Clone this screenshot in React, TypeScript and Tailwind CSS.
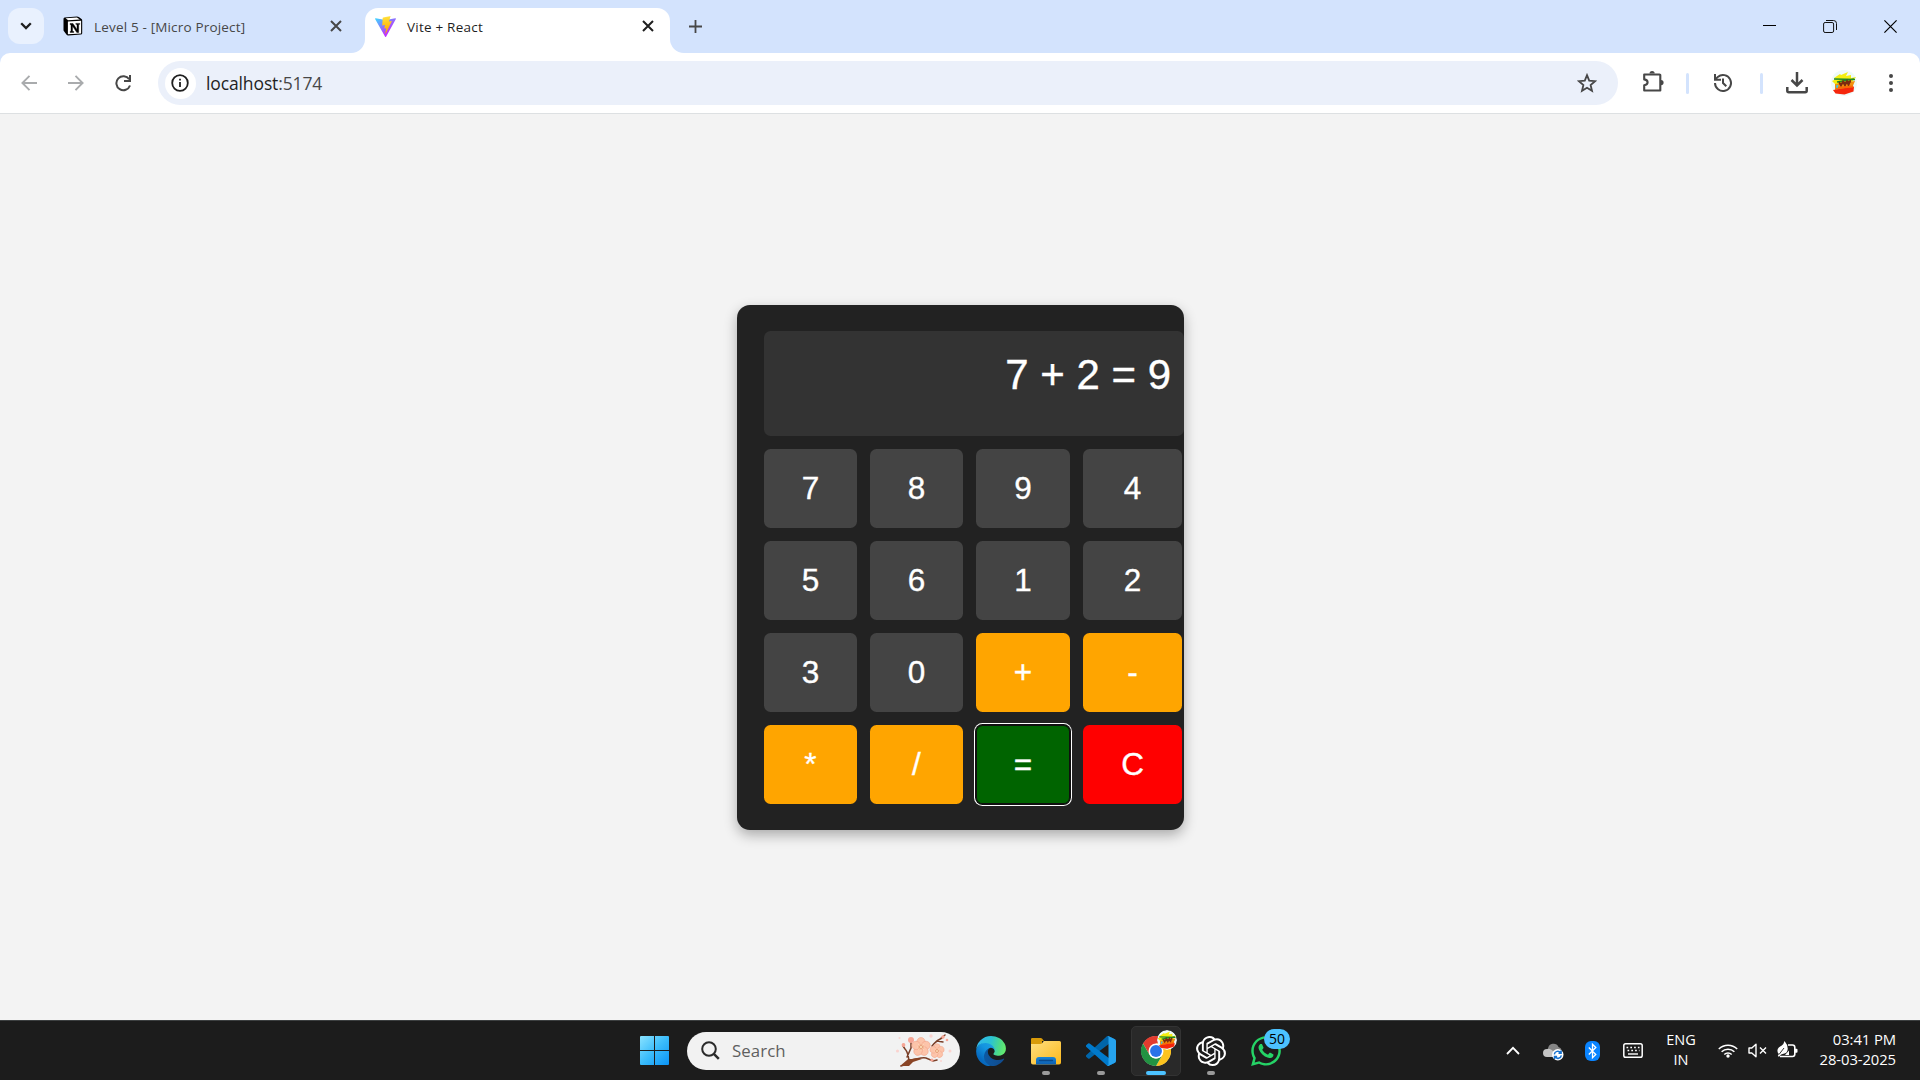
import React from "react";
import { FaWhatsapp } from "react-icons/fa";
import { SiOpenai } from "react-icons/si";

const UI = "font-['Open_Sans','Noto_Sans',sans-serif]";

function Cross({ className, color }: { className: string; color: string }) {
  return (
    <svg className={className} width="12" height="12" viewBox="0 0 12 12" stroke={color} strokeWidth="2" fill="none">
      <path d="M1 1l10 10M11 1L1 11" />
    </svg>
  );
}

function NotionIcon() {
  return (
    <svg width="20" height="20" viewBox="0 0 20 20" className="-ml-px shrink-0">
      <path d="M1.6 1.6L14 .6q1 0 1.800.5l2.700 2q.7.5.7 1.400v12.700q0 1.300-1.400 1.400L5.300 19.400q-1 .1-1.700-.7L1 15.300q-.5-.6-.5-1.400V3q0-1.300 1.100-1.400z" fill="#000" />
      <path d="M2.600 2.300l11.300-.8 2.900 1.900-11.700.8z" fill="#fff" />
      <path d="M4.900 5.500l13.200-.8v12.700l-13.200.9z" fill="#fff" />
      <path d="M7 7.500h3l4 6V8.500l-1.200-.2v-.9h4v.9l-1.100.3v7.900h-1.900L9.500 10v5.300l1.300.2v.9H7.100v-.9l.9-.3V8.700l-1-.2z" fill="#000" stroke="#000" strokeWidth=".4" />
    </svg>
  );
}

function ViteIcon() {
  return (
    <svg width="21" height="21" viewBox="0 0 256 257" className="shrink-0">
      <defs>
        <linearGradient id="va" x1="-.828%" x2="57.636%" y1="7.652%" y2="78.411%">
          <stop offset="0" stopColor="#41D1FF" />
          <stop offset="1" stopColor="#BD34FE" />
        </linearGradient>
        <linearGradient id="vb" x1="43.376%" x2="50.316%" y1="2.242%" y2="89.03%">
          <stop offset="0" stopColor="#FFEA83" />
          <stop offset=".08" stopColor="#FFDD35" />
          <stop offset="1" stopColor="#FFA800" />
        </linearGradient>
      </defs>
      <path fill="url(#va)" d="M255.153 37.938L134.897 252.976c-2.483 4.44-8.862 4.466-11.382.048L.875 37.958c-2.746-4.814 1.371-10.646 6.827-9.67l120.385 21.517a6.537 6.537 0 0 0 2.322-.004l117.867-21.483c5.438-.991 9.574 4.796 6.877 9.62Z" />
      <path fill="url(#vb)" d="M185.432.063L96.44 17.501a3.268 3.268 0 0 0-2.634 3.014l-5.474 92.456a3.268 3.268 0 0 0 3.997 3.378l24.777-5.718c2.318-.535 4.413 1.507 3.936 3.838l-7.361 36.047c-.495 2.426 1.782 4.5 4.151 3.78l15.304-4.649c2.372-.72 4.652 1.36 4.15 3.788l-11.698 56.621c-.732 3.542 3.979 5.473 5.943 2.437l1.313-2.028l72.516-144.72c1.215-2.423-.88-5.186-3.54-4.672l-25.505 4.922c-2.396.462-4.435-1.77-3.759-4.114l16.646-57.705c.677-2.35-1.37-4.583-3.769-4.113Z" />
    </svg>
  );
}

function Avatar({ size }: { size: number }) {
  return (
    <svg width={size} height={size} viewBox="0 0 26 26" className="shrink-0">
      <circle cx="13" cy="13" r="13" fill="#eefafa" />
      <path d="M1 11l4-2-2-1 6-4 1 1 7-3-2 4 5-1v3l5-1-4 5-16 3z" fill="#f4ee10" />
      <path d="M4 14l20-3-3 7-17 2z" fill="#f2900c" />
      <path d="M3 9l21 .5M6 12l17-3" stroke="#1c8a2a" strokeWidth="1.700" />
      <path d="M8 13.500l12-2M8 12l2 3.500 2-4 2 4 2-4.500 1.500 4 2-5" stroke="#7c2a10" strokeWidth="1.800" fill="none" />
      <path d="M2 20l9-1.500 12-2-.5 5-9 3-9-1z" fill="#f5260c" />
      <path d="M5 18l17-1.500" stroke="#f86a08" strokeWidth="1.800" />
      <path d="M5.500 15l2 .3-1 3-1.500-.8z" fill="#36c8e8" />
    </svg>
  );
}

function TabStrip() {
  return (
    <div className="flex h-[53px] w-full bg-[#d3e3fd]">
      <div className="ml-2 mt-2 flex h-9 w-9 shrink-0 items-center justify-center rounded-[12px] bg-[#e9f1fe]">
        <svg width="12" height="8" viewBox="0 0 12 8" fill="none" stroke="#1f1f1f" strokeWidth="2.300">
          <path d="M1.200 1.200L6 6l4.800-4.800" />
        </svg>
      </div>
      <div className="flex h-[53px] w-[307px] shrink-0 items-center pb-[1px] pl-5">
        <NotionIcon />
        <span className="ml-[11px] mt-[2px] w-[201px] whitespace-nowrap text-[13.500px] tracking-[0.170px] text-[#474747]">Level 5 - [Micro Project]</span>
        <Cross className="ml-[35px]" color="#474747" />
      </div>
      <div className="flex h-[53px] w-[347px] shrink-0">
        <div className="h-full w-[14px] bg-white">
          <div className="h-full w-full rounded-br-[14px] bg-[#d3e3fd]" />
        </div>
        <div className="mt-2 flex h-[45px] w-[305px] items-center rounded-t-[13px] bg-white pb-[9px] pl-[10px]">
          <ViteIcon />
          <span className="ml-[11px] mt-[2px] w-[200px] whitespace-nowrap text-[13.500px] tracking-[0.220px] text-[#1f1f1f]">Vite + React</span>
          <Cross className="ml-[35px]" color="#1f1f1f" />
        </div>
        <div className="h-full w-[14px] bg-white">
          <div className="h-full w-full rounded-bl-[14px] bg-[#d3e3fd]" />
        </div>
      </div>
      <svg className="-ml-[9px] mt-5 shrink-0" width="13" height="13" viewBox="0 0 13 13" stroke="#474747" strokeWidth="1.800">
        <path d="M6.500 0v13M0 6.500h13" />
      </svg>
      <div className="ml-auto mr-[23px] mt-5 flex h-[13px]">
        <svg width="13" height="13" viewBox="0 0 13 13" stroke="#000">
          <path d="M0 5.500h13" />
        </svg>
        <svg className="ml-[47px]" width="14" height="13" viewBox="0 0 14 13" stroke="#111" fill="none">
          <rect x=".6" y="2.500" width="10" height="10" rx="1.500" />
          <path d="M3 .5h7.500a3 3 0 0 1 3 3V10" />
        </svg>
        <svg className="ml-[47px]" width="13" height="13" viewBox="0 0 13 13" stroke="#000" strokeWidth="1.200">
          <path d="M.4.400l12.200 12.200M12.600.400L.4 12.600" />
        </svg>
      </div>
    </div>
  );
}

function Toolbar() {
  return (
    <div className="h-[61px] w-full bg-[#d3e3fd]">
      <div className="flex h-[61px] w-full items-center rounded-t-[10px] border-b border-[#dde0e2] bg-white">
        <svg className="ml-[21px] shrink-0" width="16" height="16" viewBox="0 0 16 16" fill="none" stroke="#a9abad" strokeWidth="1.900">
          <path d="M8.500.9L1.400 8l7.100 7.100M1.400 8H16" />
        </svg>
        <svg className="ml-[31px] shrink-0" width="16" height="16" viewBox="0 0 16 16" fill="none" stroke="#a9abad" strokeWidth="1.900">
          <path d="M7.500.9L14.600 8l-7.100 7.100M14.600 8H0" />
        </svg>
        <svg className="ml-[31px] shrink-0" width="17" height="17" viewBox="0 0 17 17" fill="none" stroke="#474747" strokeWidth="2">
          <path d="M14.200 4.300A7 7 0 1 0 15 10.500" />
          <path d="M15 0v6H9" />
        </svg>
        <div className="ml-[26px] flex h-11 w-[1460px] shrink-0 items-center rounded-full bg-[#ebf0fa] pl-[7px]">
          <div className="flex h-[31px] w-[31px] shrink-0 items-center justify-center rounded-full bg-white">
            <svg width="18" height="18" viewBox="0 0 18 18" fill="none" stroke="#1f1f1f" strokeWidth="1.800" className="-ml-px">
              <circle cx="9" cy="9" r="7.800" />
              <path d="M9 8v5M9 4.800v1.800" />
            </svg>
          </div>
          <span className="ml-[10px] whitespace-nowrap text-[17.500px] tracking-[-0.120px] text-[#1f1f1f]">
            localhost<span className="text-[#474747]">:5174</span>
          </span>
          <svg className="ml-auto mr-[21px]" width="20" height="20" viewBox="0 0 20 20" fill="none" stroke="#474747" strokeWidth="1.800">
            <path d="M10 2.200l2.200 5.500 5.900.5-4.500 3.800 1.400 5.800L10 14.700l-5 3.100 1.400-5.800L1.900 8.200l5.900-.5z" />
          </svg>
        </div>
        <svg className="-mt-[3px] ml-[24px] shrink-0" width="22" height="22" viewBox="0 0 22 22">
          <path d="M2.200 3.500h15.300a.8.800 0 0 1 .8.800v15.200H2.200v-5.200c2.200-.4 3.400-1.500 3.400-3s-1.200-2.500-3.400-2.900z" fill="none" stroke="#474747" strokeWidth="2.100" strokeLinejoin="round" />
          <path d="M7.500 2.600a2.600 2.600 0 0 1 5.200 0zM19 9a2.600 2.600 0 0 1 0 5.200z" fill="#474747" />
        </svg>
        <div className="ml-[22px] h-[21px] w-[3px] shrink-0 rounded-full bg-[#d3e3fd]" />
        <svg className="-mt-px ml-[24px] shrink-0" width="20" height="20" viewBox="0 0 20 20" fill="none" stroke="#474747" strokeWidth="2">
          <path d="M2 10A8 8 0 1 0 4.800 3.900L2.500 6.200" />
          <path d="M2 1v5.800h6" />
          <path d="M10 5.500V10l3.300 3.300" />
        </svg>
        <div className="ml-[27px] h-[21px] w-[3px] shrink-0 rounded-full bg-[#d3e3fd]" />
        <svg className="ml-[23px] shrink-0" width="22" height="22" viewBox="0 0 22 22" fill="none" stroke="#474747" strokeWidth="2.500">
          <path d="M11 0v13M5.500 8l5.500 5.500L16.500 8" />
          <path d="M1.300 15v3.700a1.500 1.500 0 0 0 1.500 1.500h16.400a1.500 1.500 0 0 0 1.500-1.500V15" />
        </svg>
        <div className="ml-[23px] shrink-0">
          <Avatar size={26} />
        </div>
        <svg className="ml-8 shrink-0" width="4" height="18" viewBox="0 0 4 18" fill="#474747">
          <circle cx="2" cy="2" r="2" />
          <circle cx="2" cy="9" r="2" />
          <circle cx="2" cy="16" r="2" />
        </svg>
      </div>
    </div>
  );
}

const KEY = "bg-[#444]";
const OP = "bg-[#ffa500]";
const KEYS: [string, string][] = [
  ["7", KEY], ["8", KEY], ["9", KEY], ["4", KEY],
  ["5", KEY], ["6", KEY], ["1", KEY], ["2", KEY],
  ["3", KEY], ["0", KEY], ["+", OP], ["-", OP],
  ["*", OP], ["/", OP],
  ["=", "bg-[#006400] shadow-[inset_0_0_0_1px_#101010,0_0_0_1px_#101010,0_0_0_2px_#fff]"],
  ["C", "bg-[#f00]"],
];

function Calculator() {
  return (
    <div className="h-[525px] w-[447px] shrink-0 rounded-[13px] bg-[#222] pl-[27px] pt-[26px] font-['Liberation_Sans',Arial,sans-serif] text-white shadow-[0_5px_13px_rgba(0,0,0,0.3)] [-webkit-text-stroke:0.35px_#fff]">
      <div className="h-[105px] w-[420px] rounded-[6.500px] bg-[#333] px-[13px] py-[12px] text-right text-[42px] leading-[63px]">7 + 2 = 9</div>
      <div className="mt-[13px] grid grid-cols-[93px_93px_94px_99px] gap-[13px]">
        {KEYS.map(([label, tone]) => (
          <button key={label} className={`h-[79px] rounded-[6.500px] pb-[2px] text-[31.500px] leading-[36px] ${tone}`}>
            {label}
          </button>
        ))}
      </div>
    </div>
  );
}

function Blossom() {
  const petals = [0, 72, 144, 216, 288];
  const flowers: [number, number, number][] = [[25, 13, 0.9], [41, 17, 0.7]];
  return (
    <svg width="56" height="33" viewBox="0 0 56 33" className="ml-auto mr-[8px]">
      <path d="M5 32c5-1 6-3 8-6-1-4-1-8-4-11l-2-3M12 26c8 0 12-3 18-2l7 3 4-1M11 23l4-9v-6M36 12c3-3 3-5 10-8M41 7l6 1M44 5l5-4" stroke="#7a3f28" strokeWidth="1.500" fill="none" strokeLinecap="round" />
      <path d="M4 32l7-6 10-2 5 1-9 3-4 4z" fill="#8a4526" />
      {flowers.map(([x, y, s]) => (
        <g key={x} transform={`translate(${x} ${y}) scale(${s})`}>
          {petals.map((a) => (
            <ellipse key={a} cx="0" cy="-5.500" rx="4.600" ry="5" fill="#fcc4aa" stroke="#f2a58c" strokeWidth=".7" transform={`rotate(${a})`} />
          ))}
          <circle r="2.800" fill="#e08464" />
          <path d="M-3-3L3 3M3-3l-6 6M0-4v8M-4 0h8" stroke="#ffe9c0" strokeWidth=".7" />
        </g>
      ))}
      <g fill="#f6a595">
        <circle cx="15" cy="6" r="3" />
        <circle cx="7.500" cy="11" r="1.900" />
        <circle cx="47" cy="3" r="1.700" />
        <circle cx="51" cy="6" r="1.300" />
        <circle cx="36" cy="26" r="1.600" />
      </g>
      <g fill="#fbd3cf">
        <circle cx="1.500" cy="17" r="1.500" />
        <circle cx="35" cy="2" r="1.700" />
        <circle cx="54" cy="17" r="1.500" />
        <circle cx="3.500" cy="4" r="1" />
        <circle cx="45" cy="27" r="1" />
      </g>
    </svg>
  );
}

function WindowsIcon() {
  return (
    <svg width="29" height="29" viewBox="0 0 29 29" className="shrink-0">
      <defs>
        <linearGradient id="w" x1="0" y1="0" x2="29" y2="29" gradientUnits="userSpaceOnUse">
          <stop offset="0" stopColor="#8ae3ff" />
          <stop offset=".5" stopColor="#3bbcfb" />
          <stop offset="1" stopColor="#0a93f5" />
        </linearGradient>
      </defs>
      <path fill="url(#w)" d="M1 0h13v14H0V1q0-1 1-1zM15 0h13q1 0 1 1v13H15zM0 15h14v14H1q-1 0-1-1zM15 15h14v13q0 1-1 1H15z" />
    </svg>
  );
}

function EdgeIcon() {
  return (
    <svg width="30" height="30" viewBox="0 0 256 258">
      <defs>
        <linearGradient id="e1" x1="63" y1="178" x2="241" y2="178" gradientUnits="userSpaceOnUse">
          <stop offset="0" stopColor="#0c59a4" />
          <stop offset="1" stopColor="#114a8b" />
        </linearGradient>
        <linearGradient id="e2" x1="152" y1="88" x2="46" y2="204" gradientUnits="userSpaceOnUse">
          <stop offset="0" stopColor="#1b9de2" />
          <stop offset=".4" stopColor="#1394df" />
          <stop offset="1" stopColor="#0669bf" />
        </linearGradient>
        <linearGradient id="e3" x1="10" y1="60" x2="250" y2="120" gradientUnits="userSpaceOnUse">
          <stop offset="0" stopColor="#31b8ec" />
          <stop offset=".45" stopColor="#2bc3d2" />
          <stop offset=".8" stopColor="#4fdc83" />
          <stop offset="1" stopColor="#66eb6e" />
        </linearGradient>
      </defs>
      <path fill="url(#e1)" d="M235.680 195.460a93.730 93.730 0 0 1-10.540 4.710 101.870 101.870 0 0 1-35.900 6.460c-47.320 0-88.540-32.550-88.540-74.320A31.480 31.480 0 0 1 117.130 105c-42.800 1.800-53.800 46.400-53.800 72.530 0 73.880 68.090 80.370 82.760 80.370 7.910 0 19.840-2.300 27-4.560l1.310-.44a128.340 128.340 0 0 0 66.600-52.800 4 4 0 0 0-5.320-5.640z" />
      <path fill="url(#e2)" d="M105.730 246.420a79.200 79.200 0 0 1-22.740-21.340 80.720 80.720 0 0 1 29.530-120c3.120-1.470 8.450-4.130 15.540-4a32.350 32.350 0 0 1 25.690 13 31.880 31.880 0 0 1 6.360 18.660c0-.21 24.460-79.600-80-79.600-43.900 0-80 41.660-80 78.210a130.150 130.150 0 0 0 12.110 56 128 128 0 0 0 156.380 67.110 75.550 75.550 0 0 1-62.780-8z" />
      <path fill="url(#e3)" d="M152.330 148.860c-.81 1.050-3.300 2.500-3.300 5.660 0 2.610 1.700 5.120 4.720 7.230 14.380 10 41.490 8.680 41.560 8.680a59.560 59.560 0 0 0 30.270-8.350 61.380 61.380 0 0 0 30.430-52.880c.26-22.410-8-37.310-11.340-43.910C223.480 23.840 177.740 0 128 0A128 128 0 0 0 0 126.100c.48-36.540 36.800-66.050 80-66.050 3.500 0 23.460.34 42 10.070 16.340 8.580 24.900 18.940 30.850 29.210 6.180 10.670 7.280 24.150 7.280 29.520s-2.740 13.330-7.800 20.010z" />
    </svg>
  );
}

function ExplorerIcon() {
  return (
    <svg width="30" height="30" viewBox="0 0 30 30">
      <defs>
        <linearGradient id="f1" x1="0" y1="0" x2="1" y2="1">
          <stop offset="0" stopColor="#ffdf80" />
          <stop offset="1" stopColor="#fcb91c" />
        </linearGradient>
        <linearGradient id="f2" x1="0" y1="0" x2="0" y2="1">
          <stop offset="0" stopColor="#1a86d8" />
          <stop offset="1" stopColor="#0d5fb0" />
        </linearGradient>
      </defs>
      <path d="M0 3.200Q0 2 1.200 2h8.500q.8 0 1.300.6L13 5h-2v5H0z" fill="#d99b0a" />
      <path d="M0 8h9.500q1 0 1.600-.7L12.800 5H28.500Q30 5 30 6.500v20q0 2-2 2H2q-2 0-2-2z" fill="url(#f1)" />
      <path d="M5 28.500V24q0-3 3-3h14q3 0 3 3v4.500z" fill="url(#f2)" />
      <path d="M8.500 24.500h13" stroke="#0a4a8c" strokeWidth="1.400" strokeLinecap="round" />
    </svg>
  );
}

function VsCodeIcon() {
  return (
    <svg width="30" height="30" viewBox="0 0 100 100">
      <path d="M96.460 10.800L75.860.870A6.230 6.230 0 0 0 68.750 2.080L1.300 63.580a4.170 4.170 0 0 0 0 6.170l5.510 5a4.170 4.170 0 0 0 5.320.24L93.360 13.370C96.080 11.300 100 13.250 100 16.670v-.24a6.250 6.250 0 0 0-3.540-5.630z" fill="#0065a9" />
      <path d="M96.460 89.200l-20.600 9.920a6.230 6.230 0 0 1-7.110-1.210L1.300 36.410a4.170 4.170 0 0 1 0-6.170l5.510-5a4.170 4.170 0 0 1 5.320-.24l81.230 61.620c2.720 2.060 6.640.12 6.640-3.300v.240a6.250 6.250 0 0 1-3.540 5.640z" fill="#007acc" />
      <path d="M75.860 99.130a6.230 6.230 0 0 1-7.110-1.210c2.310 2.310 6.250.67 6.250-2.590V4.670c0-3.260-3.940-4.900-6.250-2.590A6.230 6.230 0 0 1 75.860.870l20.600 9.900A6.250 6.250 0 0 1 100 16.410v67.180a6.250 6.250 0 0 1-3.540 5.630z" fill="#26a3ee" />
    </svg>
  );
}

function ChromeIcon() {
  return (
    <svg width="30" height="30" viewBox="0 0 48 48">
      <circle cx="24" cy="24" r="23.500" fill="#fff" />
      <path d="M24 12h20.800A24 24 0 0 0 3.200 12L13.600 30 24 12z" fill="#e33b2e" />
      <path d="M34.400 30L24 48A24 24 0 0 0 44.800 12H24z" fill="#fcc31e" />
      <path d="M13.600 30L3.200 12A24 24 0 0 0 24 48l10.400-18a12 12 0 0 1-20.800 0z" fill="#229342" />
      <circle cx="24" cy="24" r="12" fill="#fff" />
      <circle cx="24" cy="24" r="9.500" fill="#2a73e8" />
    </svg>
  );
}

function TaskItem({ children, mark }: { children: React.ReactNode; mark?: "dot" | "bar" }) {
  return (
    <div className={`relative flex h-[50px] w-[50px] shrink-0 items-center justify-center ${mark === "bar" ? "rounded-[5px] border border-[#333] bg-[#292929]" : ""}`}>
      {children}
      {mark === "dot" && <div className="absolute bottom-[1px] left-[21px] h-1 w-2 rounded-full bg-[#9a9a9a]" />}
      {mark === "bar" && <div className="absolute bottom-0 left-[14px] h-1 w-5 rounded-full bg-[#4cc2ff]" />}
    </div>
  );
}

function Tray() {
  return (
    <div className="ml-auto flex h-full items-center text-white">
      <svg className="shrink-0" width="14" height="9" viewBox="0 0 14 9" fill="none" stroke="#fff" strokeWidth="1.800">
        <path d="M1 8l6-6.200L13 8" />
      </svg>
      <svg className="ml-[23px] mt-[3px] shrink-0" width="21" height="18" viewBox="0 0 21 18">
        <path d="M5 5.500a5.500 5.500 0 0 1 10.500-1.500A4.500 4.500 0 0 1 17 12H8z" fill="#868686" />
        <path d="M4 14a4 4 0 0 1 0-8Q6 5.300 8 6.600L14 11v3z" fill="#c4c4c4" />
        <circle cx="14.800" cy="11.800" r="5.700" fill="#fff" />
        <path d="M11.300 11.300a3.500 3.500 0 0 1 6.300-1.600M18.300 12.300a3.500 3.500 0 0 1-6.300 1.600M18.100 7.600v2.600h-2.600M11.500 16v-2.600h2.600" stroke="#1571cf" strokeWidth="1.500" fill="none" />
      </svg>
      <svg className="ml-[21px] shrink-0" width="15" height="20" viewBox="0 0 15 20">
        <rect width="15" height="20" rx="6" fill="#0a84ff" />
        <path d="M3.800 6.500l7 7-3.300 3.200V3.300l3.300 3.200-7 7" stroke="#fff" strokeWidth="1.300" fill="none" />
      </svg>
      <svg className="ml-[23px] -mt-px shrink-0" width="20" height="15" viewBox="0 0 20 15">
        <rect x=".8" y=".8" width="18.400" height="13.400" rx="1.800" fill="none" stroke="#fff" strokeWidth="1.500" />
        <path d="M3.500 4.500h13M4.500 7.500h12" stroke="#fff" strokeWidth="1.700" strokeDasharray="1.700 2.100" />
        <path d="M5 11h10" stroke="#fff" strokeWidth="1.400" />
      </svg>
      <div className="-mt-px ml-[21px] w-[34px] text-center text-[14.500px] leading-5">
        ENG
        <br />
        IN
      </div>
      <svg className="-mt-px ml-[20px] shrink-0" width="20" height="15" viewBox="0 0 20 15" fill="none" stroke="#fff" strokeWidth="1.500">
        <path d="M.8 6a13 13 0 0 1 18.400 0M3.600 8.800a9 9 0 0 1 12.800 0M6.300 11.500a5.200 5.200 0 0 1 7.400 0" />
        <circle cx="10" cy="13" r="1.700" fill="#fff" stroke="none" />
      </svg>
      <svg className="ml-[10px] shrink-0" width="19" height="15" viewBox="0 0 19 15" fill="none" stroke="#fff" strokeWidth="1.400">
        <path d="M1 5h2.800L8 1.200v12.600L3.800 10H1z" strokeLinejoin="round" />
        <path d="M12 4.500l6 6M18 4.500l-6 6" />
      </svg>
      <svg className="-mt-[3px] ml-[10px] shrink-0" width="21" height="17" viewBox="0 0 21 17">
        <path d="M11 4h4.500A2.300 2.300 0 0 1 17.800 6.300v7A2.300 2.300 0 0 1 15.500 15.500H3" fill="none" stroke="#fff" strokeWidth="1.600" />
        <path d="M18 7.800h1.500q1 0 1 1v2q0 1-1 1H18z" fill="#fff" />
        <path d="M7.500 0q3.500 4 3.200 8.300-.4 4.200-4.200 4.400-2.500 0-4.500 3L.8 15l1-2Q-1 9.500 1.800 6.500 3 5.500 4.800 4.500 6.800 3 7.500 0z" fill="#fff" />
        <path d="M2 13.500L7 7" stroke="#1c1c1c" strokeWidth=".9" />
        <path d="M8 14h4V9.500z" fill="#fff" />
      </svg>
      <div className="-mt-[3px] ml-[19px] mr-[24px] w-[79px] whitespace-nowrap text-right text-[14.800px] leading-5 tracking-[-0.080px]">
        <div>03:41 PM</div>
        <div>28-03-2025</div>
      </div>
    </div>
  );
}

function Taskbar() {
  return (
    <div className="flex h-[60px] w-full items-center border-t border-[#3c3f40] bg-[#1c1c1c]">
      <div className="ml-[640px] flex shrink-0 items-center">
        <WindowsIcon />
        <div className="ml-[18px] flex h-[38px] w-[273px] shrink-0 items-center rounded-full bg-[#f2f2f2] pl-[14px]">
          <svg className="shrink-0" width="19" height="19" viewBox="0 0 19 19" fill="none" stroke="#2a2a2a" strokeWidth="2">
            <circle cx="8" cy="8" r="6.800" />
            <path d="M12.800 12.800l5 5" strokeWidth="2.500" />
          </svg>
          <span className="ml-[12px] mt-px text-[16.800px] tracking-[0.100px] text-[#5f5f5f]">Search</span>
          <Blossom />
        </div>
      </div>
      <div className="ml-[6px] flex shrink-0 gap-[5px]">
        <TaskItem><EdgeIcon /></TaskItem>
        <TaskItem mark="dot"><ExplorerIcon /></TaskItem>
        <TaskItem mark="dot"><VsCodeIcon /></TaskItem>
        <TaskItem mark="bar">
          <ChromeIcon />
          <div className="absolute left-[25px] top-[3px] h-5 w-5 overflow-hidden rounded-full">
            <Avatar size={20} />
          </div>
        </TaskItem>
        <TaskItem mark="dot"><SiOpenai size={30} color="#fff" /></TaskItem>
        <TaskItem>
          <FaWhatsapp size={34} color="#25d366" />
          <div className="absolute left-[23px] top-[3px] flex h-5 w-[26px] items-center justify-center rounded-full bg-[#4cc2ff] text-[14px] leading-none text-black">50</div>
        </TaskItem>
      </div>
      <Tray />
    </div>
  );
}

export default function App() {
  return (
    <div className={`flex h-[1080px] w-[1920px] flex-col overflow-hidden bg-[#f3f3f3] ${UI}`}>
      <TabStrip />
      <Toolbar />
      <main className="flex h-[906px] w-full items-center justify-center pl-px pt-px">
        <Calculator />
      </main>
      <Taskbar />
    </div>
  );
}
